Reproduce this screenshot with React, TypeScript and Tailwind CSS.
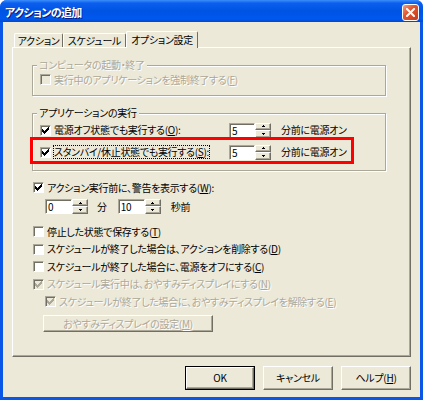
import type { ReactNode } from 'react';

// classic 3D edges
const sunken = 'border border-t-[#aca899] border-l-[#aca899] border-r-white border-b-white shadow-[inset_1px_1px_0_#716f64]';
const raised = 'border border-t-white border-l-white border-r-[#716f64] border-b-[#716f64] shadow-[inset_-1px_-1px_0_#aca899]';
const grayText = 'text-[#aca899] [text-shadow:1px_1px_0_#ffffff]';

function Check({ checked = false, disabled = false }: { checked?: boolean; disabled?: boolean }) {
    return (
        <span className={`flex h-[11px] w-[11px] shrink-0 items-center justify-center ${sunken} ${disabled ? 'bg-[#ece9d8]' : 'bg-white'}`}>
            {checked && (
                <svg width="7" height="7" viewBox="0 0 7 7" shapeRendering="crispEdges">
                    <path
                        d="M6 0h1v1h-1z M5 1h2v1h-2z M0 2h1v1h-1z M4 2h3v1h-3z M0 3h2v1h-2z M3 3h3v1h-3z M0 4h5v1h-5z M1 5h3v1h-3z M2 6h1v1h-1z"
                        fill={disabled ? '#aca899' : '#000000'}
                    />
                </svg>
            )}
        </span>
    );
}

function Row({ children, checked, disabled, className = 'h-[17px]' }: { children: ReactNode; checked?: boolean; disabled?: boolean; className?: string }) {
    return (
        <div className={`flex items-center gap-[3px] ${className}`}>
            <Check checked={checked} disabled={disabled} />
            <span className={`whitespace-nowrap leading-[12px] ${disabled ? grayText : ''}`}>{children}</span>
        </div>
    );
}

function Spin({ value, w }: { value: string; w: string }) {
    return (
        <div className="flex h-[15px] shrink-0">
            <div className={`${w} h-[15px] bg-white pl-[2px] leading-[13px] ${sunken}`}>{value}</div>
            <div className="flex w-[16px] flex-col">
                <div className={`flex h-[7px] items-center justify-center bg-[#ece9d8] ${raised}`}>
                    <svg width="3" height="2" viewBox="0 0 3 2" shapeRendering="crispEdges">
                        <path d="M1 0h1v1h1v1H0V1h1z" fill="#000" />
                    </svg>
                </div>
                <div className={`flex h-[8px] items-center justify-center bg-[#ece9d8] ${raised}`}>
                    <svg width="3" height="2" viewBox="0 0 3 2" shapeRendering="crispEdges">
                        <path d="M0 0h3v1H2v1H1V1H0z" fill="#000" />
                    </svg>
                </div>
            </div>
        </div>
    );
}

function Group({ label, children, className = '', disabled = false }: { label: string; children: ReactNode; className?: string; disabled?: boolean }) {
    return (
        <fieldset className={`ml-[19px] w-[354px] border border-[#aca899] shadow-[1px_1px_0_#ffffff,inset_1px_1px_0_#ffffff] ${className}`}>
            <legend className={`ml-[4px] bg-[#ece9d8] px-[2px] leading-[12px] ${disabled ? grayText : ''}`}>{label}</legend>
            {children}
        </fieldset>
    );
}

function Btn({ children, isDefault = false, disabled = false, className = 'w-[70px] h-[24px]' }: { children: ReactNode; isDefault?: boolean; disabled?: boolean; className?: string }) {
    return (
        <div className={`${className} shrink-0 ${isDefault ? 'border border-black' : ''}`}>
            <div className={`flex h-full w-full items-center justify-center bg-[#ece9d8] leading-[12px] ${raised} ${disabled ? grayText : ''}`}>
                {children}
            </div>
        </div>
    );
}

export default function App() {
    return (
        <div className="relative flex h-[400px] w-[423px] flex-col rounded-t-[7px] bg-[#0a56e6] font-['Noto_Sans_CJK_JP','Noto_Sans',sans-serif] text-[10px] tracking-[-0.3px] text-black [font-feature-settings:'palt']">
            {/* Title bar */}
            <div className="flex h-[22px] shrink-0 items-center justify-between rounded-t-[7px] bg-[linear-gradient(#3d8ffa_0%,#0b5eee_14%,#0054e3_50%,#0058ee_85%,#0049d0_100%)] pl-[5px] pr-[4px] pt-[3px]">
                <span className="text-[11px] font-bold leading-[13px] tracking-[-0.6px] text-white [text-shadow:1px_1px_0_#0a1883]">アクションの追加</span>
                <div className="flex h-[17px] w-[17px] items-center justify-center rounded-[3px] border border-white bg-[linear-gradient(135deg,#f4a183_0%,#e2572f_40%,#c83a19_100%)]">
                    <svg width="9" height="9" viewBox="0 0 9 9">
                        <path d="M1 1L8 8M8 1L1 8" stroke="#ffffff" strokeWidth="2" strokeLinecap="square" />
                    </svg>
                </div>
            </div>

            {/* Body */}
            <div className="mx-[3px] mb-[3px] flex flex-1 flex-col bg-[#ece9d8] pl-[9px] pr-[9px] pt-[9px]">
                {/* Tabs */}
                <div className="flex h-[16px] items-end pl-[2px]">
                    <div className="flex h-[14px] w-[49px] items-center justify-center rounded-t-[2px] border border-b-0 border-t-white border-l-white border-r-[#716f64] leading-[12px]">アクション</div>
                    <div className="flex h-[14px] w-[63px] items-center justify-center rounded-t-[2px] border border-b-0 border-t-white border-l-white border-r-[#716f64] leading-[12px]">スケジュール</div>
                    <div className="relative z-10 -mb-px flex h-[17px] w-[72px] items-center justify-center rounded-t-[2px] border border-b-0 border-t-white border-l-white border-r-[#716f64] bg-[#ece9d8] pb-[1px] leading-[12px]">オプション設定</div>
                </div>

                {/* Panel */}
                <div className={`flex h-[310px] w-[399px] flex-col ${raised}`}>
                    <Group label="コンピュータの起動・終了" className="mt-[11px]" disabled>
                        <div className="pb-[7px] pl-[7px]">
                            <Row disabled>実行中のアプリケーションを強制終了する(<span className="underline">F</span>)</Row>
                        </div>
                    </Group>

                    <Group label="アプリケーションの実行" className="mt-[11px]">
                        <div className="pb-[7px] pl-[7px]">
                            <div className="flex h-[22px] items-center">
                                <div className="w-[189px]">
                                    <Row checked>電源オフ状態でも実行する(<span className="underline">O</span>):</Row>
                                </div>
                                <Spin value="5" w="w-[26px]" />
                                <span className="ml-[10px] whitespace-nowrap leading-[12px]">分前に電源オン</span>
                            </div>
                            <div className="flex h-[22px] items-center">
                                <div className="flex w-[189px] items-center gap-[3px]">
                                    <Check checked />
                                    <span className="whitespace-nowrap leading-[12px] outline-1 outline-dotted outline-black">
                                        スタンバイ/休止状態でも実行する(<span className="underline">S</span>):
                                    </span>
                                </div>
                                <Spin value="5" w="w-[26px]" />
                                <span className="ml-[10px] whitespace-nowrap leading-[12px]">分前に電源オン</span>
                            </div>
                        </div>
                    </Group>

                    <div className="mt-[8px] pl-[20px]">
                        <Row checked>アクション実行前に、警告を表示する(<span className="underline">W</span>):</Row>
                        <div className="mt-[3px] ml-[12px] flex h-[15px] items-center">
                            <Spin value="0" w="w-[27px]" />
                            <span className="ml-[9px] leading-[12px]">分</span>
                            <span className="ml-[11px]"><Spin value="10" w="w-[27px]" /></span>
                            <span className="ml-[10px] leading-[12px]">秒前</span>
                        </div>
                        <div className="mt-[9px]">
                            <Row className="h-[17px]">停止した状態で保存する(<span className="underline">T</span>)</Row>
                            <Row className="h-[18px]">スケジュールが終了した場合は、アクションを削除する(<span className="underline">D</span>)</Row>
                            <Row className="h-[17px]">スケジュールが終了した場合に、電源をオフにする(<span className="underline">C</span>)</Row>
                            <Row className="h-[18px]" checked disabled>スケジュール実行中は、おやすみディスプレイにする(<span className="underline">N</span>)</Row>
                            <div className="pl-[12px]">
                                <Row className="h-[17px]" checked disabled>スケジュールが終了した場合に、おやすみディスプレイを解除する(<span className="underline">E</span>)</Row>
                            </div>
                        </div>
                        <div className="mt-[5px] pl-[10px]">
                            <Btn disabled className="w-[170px] h-[17px]">おやすみディスプレイの設定(<span className="underline">M</span>)</Btn>
                        </div>
                    </div>
                </div>

                {/* Dialog buttons */}
                <div className="mt-[9px] flex justify-end gap-[8px]">
                    <Btn isDefault>OK</Btn>
                    <Btn>キャンセル</Btn>
                    <Btn>ヘルプ(<span className="underline">H</span>)</Btn>
                </div>
            </div>

            {/* red annotation frame */}
            <div className="pointer-events-none absolute left-[30px] top-[137px] h-[27px] w-[324px] border-[3px] border-[#ff0000]" />
        </div>
    );
}
